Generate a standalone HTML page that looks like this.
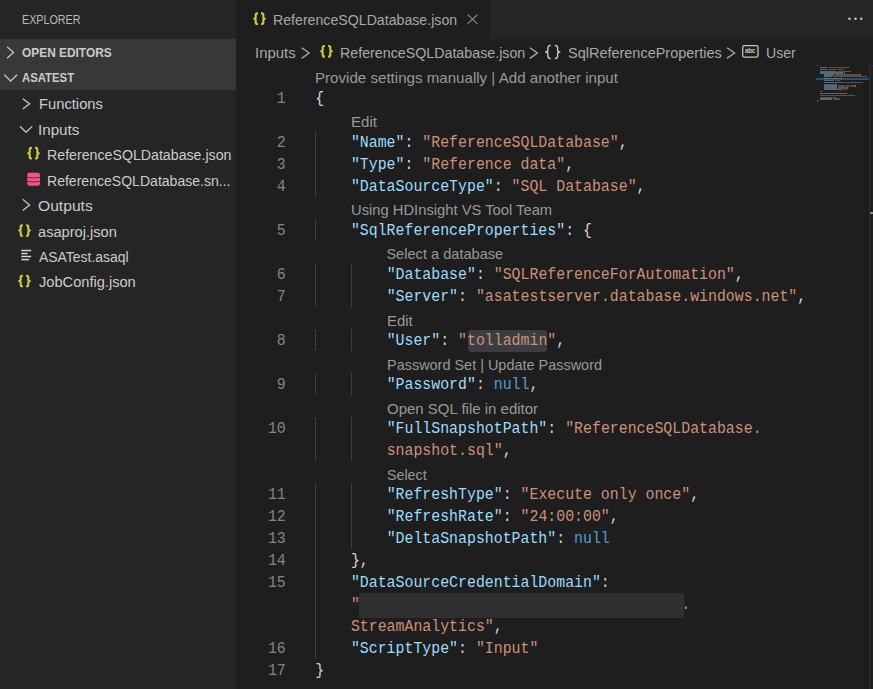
<!DOCTYPE html>
<html><head><meta charset="utf-8">
<style>
html,body{margin:0;padding:0;width:873px;height:689px;overflow:hidden;background:#1e1e1e;position:relative;font-family:"Liberation Sans",sans-serif}
.abs{position:absolute}
.t{position:absolute;white-space:pre;transform-origin:0 0;font-family:"Liberation Sans",sans-serif}
.ln{position:absolute;left:236px;width:49.8px;text-align:right;font-family:"Liberation Mono",monospace;font-size:14.881px;line-height:22px;color:#858585;white-space:pre;transform:scaleY(1.06);transform-origin:0 15px}
.cl{position:absolute;font-family:"Liberation Mono",monospace;font-size:14.881px;line-height:22px;white-space:pre;transform:scaleY(1.06);transform-origin:0 15px}
.g{position:absolute;width:1px;height:22px;background:#404040}
.mm{position:absolute;height:1.3px;opacity:.4}
svg{position:absolute;left:0;top:0;overflow:visible}
</style></head><body>
<div class="abs" style="left:0;top:0;width:236px;height:689px;background:#252526"></div>
<div class="abs" style="left:236px;top:0;width:1px;height:689px;background:#222223"></div>
<div class="abs" style="left:0;top:39px;width:236px;height:51px;background:#383838"></div>
<div class="abs" style="left:237px;top:0;width:636px;height:39px;background:#252526"></div>
<div class="abs" style="left:237px;top:0;width:253px;height:39px;background:#1e1e1e"></div>
<!-- selection + redaction -->
<div class="abs" style="left:467.6px;top:330px;width:79.4px;height:22px;border-radius:3px;background:#3a3d41"></div>
<div class="abs" style="left:358.8px;top:593px;width:325.4px;height:24.5px;border-radius:2px;background:#2f2f2f"></div>
<!-- minimap highlight + ruler -->
<div class="abs" style="left:816px;top:78px;width:53px;height:2px;background:#264f78"></div>
<div class="abs" style="left:869px;top:64.5px;width:2px;height:625px;background:#282828"></div>
<div class="abs" style="left:869px;top:64.5px;width:4px;height:1px;background:#2c2c2c"></div>
<div class="abs" style="left:870px;top:212px;width:3px;height:2px;background:#8c8c8c"></div>
<div class="mm" style="left:816.60px;top:65.00px;width:0.92px;background:#d4d4d4"></div>
<div class="mm" style="left:820.28px;top:66.86px;width:5.52px;background:#9cdcfe"></div>
<div class="mm" style="left:825.80px;top:66.86px;width:0.92px;background:#d4d4d4"></div>
<div class="mm" style="left:827.64px;top:66.86px;width:20.24px;background:#ce9178"></div>
<div class="mm" style="left:847.88px;top:66.86px;width:0.92px;background:#d4d4d4"></div>
<div class="mm" style="left:820.28px;top:68.71px;width:5.52px;background:#9cdcfe"></div>
<div class="mm" style="left:825.80px;top:68.71px;width:0.92px;background:#d4d4d4"></div>
<div class="mm" style="left:827.64px;top:68.71px;width:9.20px;background:#ce9178"></div>
<div class="mm" style="left:837.76px;top:68.71px;width:4.60px;background:#ce9178"></div>
<div class="mm" style="left:842.36px;top:68.71px;width:0.92px;background:#d4d4d4"></div>
<div class="mm" style="left:820.28px;top:70.57px;width:14.72px;background:#9cdcfe"></div>
<div class="mm" style="left:835.00px;top:70.57px;width:0.92px;background:#d4d4d4"></div>
<div class="mm" style="left:836.84px;top:70.57px;width:3.68px;background:#ce9178"></div>
<div class="mm" style="left:841.44px;top:70.57px;width:8.28px;background:#ce9178"></div>
<div class="mm" style="left:849.72px;top:70.57px;width:0.92px;background:#d4d4d4"></div>
<div class="mm" style="left:820.28px;top:72.42px;width:22.08px;background:#9cdcfe"></div>
<div class="mm" style="left:842.36px;top:72.42px;width:0.92px;background:#d4d4d4"></div>
<div class="mm" style="left:844.20px;top:72.42px;width:0.92px;background:#d4d4d4"></div>
<div class="mm" style="left:823.96px;top:74.28px;width:9.20px;background:#9cdcfe"></div>
<div class="mm" style="left:833.16px;top:74.28px;width:0.92px;background:#d4d4d4"></div>
<div class="mm" style="left:835.00px;top:74.28px;width:24.84px;background:#ce9178"></div>
<div class="mm" style="left:859.84px;top:74.28px;width:0.92px;background:#d4d4d4"></div>
<div class="mm" style="left:823.96px;top:76.14px;width:7.36px;background:#9cdcfe"></div>
<div class="mm" style="left:831.32px;top:76.14px;width:0.92px;background:#d4d4d4"></div>
<div class="mm" style="left:833.16px;top:76.14px;width:33.12px;background:#ce9178"></div>
<div class="mm" style="left:866.28px;top:76.14px;width:0.92px;background:#d4d4d4"></div>
<div class="mm" style="left:823.96px;top:77.99px;width:5.52px;background:#9cdcfe"></div>
<div class="mm" style="left:829.48px;top:77.99px;width:0.92px;background:#d4d4d4"></div>
<div class="mm" style="left:831.32px;top:77.99px;width:10.12px;background:#ce9178"></div>
<div class="mm" style="left:841.44px;top:77.99px;width:0.92px;background:#d4d4d4"></div>
<div class="mm" style="left:823.96px;top:79.85px;width:9.20px;background:#9cdcfe"></div>
<div class="mm" style="left:833.16px;top:79.85px;width:0.92px;background:#d4d4d4"></div>
<div class="mm" style="left:835.00px;top:79.85px;width:3.68px;background:#569cd6"></div>
<div class="mm" style="left:838.68px;top:79.85px;width:0.92px;background:#d4d4d4"></div>
<div class="mm" style="left:823.96px;top:81.70px;width:16.56px;background:#9cdcfe"></div>
<div class="mm" style="left:840.52px;top:81.70px;width:0.92px;background:#d4d4d4"></div>
<div class="mm" style="left:842.36px;top:81.70px;width:20.24px;background:#ce9178"></div>
<div class="mm" style="left:823.96px;top:83.56px;width:11.96px;background:#ce9178"></div>
<div class="mm" style="left:835.92px;top:83.56px;width:0.92px;background:#d4d4d4"></div>
<div class="mm" style="left:823.96px;top:85.42px;width:11.96px;background:#9cdcfe"></div>
<div class="mm" style="left:835.92px;top:85.42px;width:0.92px;background:#d4d4d4"></div>
<div class="mm" style="left:837.76px;top:85.42px;width:7.36px;background:#ce9178"></div>
<div class="mm" style="left:846.04px;top:85.42px;width:3.68px;background:#ce9178"></div>
<div class="mm" style="left:850.64px;top:85.42px;width:4.60px;background:#ce9178"></div>
<div class="mm" style="left:855.24px;top:85.42px;width:0.92px;background:#d4d4d4"></div>
<div class="mm" style="left:823.96px;top:87.27px;width:11.96px;background:#9cdcfe"></div>
<div class="mm" style="left:835.92px;top:87.27px;width:0.92px;background:#d4d4d4"></div>
<div class="mm" style="left:837.76px;top:87.27px;width:9.20px;background:#ce9178"></div>
<div class="mm" style="left:846.96px;top:87.27px;width:0.92px;background:#d4d4d4"></div>
<div class="mm" style="left:823.96px;top:89.13px;width:17.48px;background:#9cdcfe"></div>
<div class="mm" style="left:841.44px;top:89.13px;width:0.92px;background:#d4d4d4"></div>
<div class="mm" style="left:843.28px;top:89.13px;width:3.68px;background:#569cd6"></div>
<div class="mm" style="left:820.28px;top:90.98px;width:1.84px;background:#d4d4d4"></div>
<div class="mm" style="left:820.28px;top:92.84px;width:25.76px;background:#9cdcfe"></div>
<div class="mm" style="left:846.04px;top:92.84px;width:0.92px;background:#d4d4d4"></div>
<div class="mm" style="left:820.28px;top:94.70px;width:34.96px;background:#ce9178"></div>
<div class="mm" style="left:820.28px;top:96.55px;width:14.72px;background:#ce9178"></div>
<div class="mm" style="left:835.00px;top:96.55px;width:0.92px;background:#d4d4d4"></div>
<div class="mm" style="left:820.28px;top:98.41px;width:11.04px;background:#9cdcfe"></div>
<div class="mm" style="left:831.32px;top:98.41px;width:0.92px;background:#d4d4d4"></div>
<div class="mm" style="left:833.16px;top:98.41px;width:6.44px;background:#ce9178"></div>
<div class="mm" style="left:816.60px;top:100.26px;width:0.92px;background:#d4d4d4"></div>
<div class="ln" style="top:88px">1</div>
<div class="cl" style="top:88px;left:315.20px"><span style="color:#d4d4d4">{</span></div>
<div class="ln" style="top:132px">2</div>
<div class="cl" style="top:132px;left:350.92px"><span style="color:#9cdcfe">&quot;Name&quot;</span><span style="color:#d4d4d4">: </span><span style="color:#ce9178">&quot;ReferenceSQLDatabase&quot;</span><span style="color:#d4d4d4">,</span></div>
<div class="g" style="top:131px;left:315px"></div>
<div class="ln" style="top:154px">3</div>
<div class="cl" style="top:154px;left:350.92px"><span style="color:#9cdcfe">&quot;Type&quot;</span><span style="color:#d4d4d4">: </span><span style="color:#ce9178">&quot;Reference data&quot;</span><span style="color:#d4d4d4">,</span></div>
<div class="g" style="top:153px;left:315px"></div>
<div class="ln" style="top:176px">4</div>
<div class="cl" style="top:176px;left:350.92px"><span style="color:#9cdcfe">&quot;DataSourceType&quot;</span><span style="color:#d4d4d4">: </span><span style="color:#ce9178">&quot;SQL Database&quot;</span><span style="color:#d4d4d4">,</span></div>
<div class="g" style="top:175px;left:315px"></div>
<div class="ln" style="top:220px">5</div>
<div class="cl" style="top:220px;left:350.92px"><span style="color:#9cdcfe">&quot;SqlReferenceProperties&quot;</span><span style="color:#d4d4d4">: </span><span style="color:#d4d4d4">{</span></div>
<div class="g" style="top:219px;left:315px"></div>
<div class="ln" style="top:264px">6</div>
<div class="cl" style="top:264px;left:386.64px"><span style="color:#9cdcfe">&quot;Database&quot;</span><span style="color:#d4d4d4">: </span><span style="color:#ce9178">&quot;SQLReferenceForAutomation&quot;</span><span style="color:#d4d4d4">,</span></div>
<div class="g" style="top:263px;left:315px"></div>
<div class="g" style="top:263px;left:351px"></div>
<div class="ln" style="top:286px">7</div>
<div class="cl" style="top:286px;left:386.64px"><span style="color:#9cdcfe">&quot;Server&quot;</span><span style="color:#d4d4d4">: </span><span style="color:#ce9178">&quot;asatestserver.database.windows.net&quot;</span><span style="color:#d4d4d4">,</span></div>
<div class="g" style="top:285px;left:315px"></div>
<div class="g" style="top:285px;left:351px"></div>
<div class="ln" style="top:330px">8</div>
<div class="cl" style="top:330px;left:386.64px"><span style="color:#9cdcfe">&quot;User&quot;</span><span style="color:#d4d4d4">: </span><span style="color:#ce9178">&quot;tolladmin&quot;</span><span style="color:#d4d4d4">,</span></div>
<div class="g" style="top:329px;left:315px"></div>
<div class="g" style="top:329px;left:351px"></div>
<div class="ln" style="top:374px">9</div>
<div class="cl" style="top:374px;left:386.64px"><span style="color:#9cdcfe">&quot;Password&quot;</span><span style="color:#d4d4d4">: </span><span style="color:#569cd6">null</span><span style="color:#d4d4d4">,</span></div>
<div class="g" style="top:373px;left:315px"></div>
<div class="g" style="top:373px;left:351px"></div>
<div class="ln" style="top:418px">10</div>
<div class="cl" style="top:418px;left:386.64px"><span style="color:#9cdcfe">&quot;FullSnapshotPath&quot;</span><span style="color:#d4d4d4">: </span><span style="color:#ce9178">&quot;ReferenceSQLDatabase.</span></div>
<div class="g" style="top:417px;left:315px"></div>
<div class="g" style="top:417px;left:351px"></div>
<div class="cl" style="top:440px;left:386.64px"><span style="color:#ce9178">snapshot.sql&quot;</span><span style="color:#d4d4d4">,</span></div>
<div class="g" style="top:439px;left:315px"></div>
<div class="g" style="top:439px;left:351px"></div>
<div class="ln" style="top:484px">11</div>
<div class="cl" style="top:484px;left:386.64px"><span style="color:#9cdcfe">&quot;RefreshType&quot;</span><span style="color:#d4d4d4">: </span><span style="color:#ce9178">&quot;Execute only once&quot;</span><span style="color:#d4d4d4">,</span></div>
<div class="g" style="top:483px;left:315px"></div>
<div class="g" style="top:483px;left:351px"></div>
<div class="ln" style="top:506px">12</div>
<div class="cl" style="top:506px;left:386.64px"><span style="color:#9cdcfe">&quot;RefreshRate&quot;</span><span style="color:#d4d4d4">: </span><span style="color:#ce9178">&quot;24:00:00&quot;</span><span style="color:#d4d4d4">,</span></div>
<div class="g" style="top:505px;left:315px"></div>
<div class="g" style="top:505px;left:351px"></div>
<div class="ln" style="top:528px">13</div>
<div class="cl" style="top:528px;left:386.64px"><span style="color:#9cdcfe">&quot;DeltaSnapshotPath&quot;</span><span style="color:#d4d4d4">: </span><span style="color:#569cd6">null</span></div>
<div class="g" style="top:527px;left:315px"></div>
<div class="g" style="top:527px;left:351px"></div>
<div class="ln" style="top:550px">14</div>
<div class="cl" style="top:550px;left:350.92px"><span style="color:#d4d4d4">},</span></div>
<div class="g" style="top:549px;left:315px"></div>
<div class="ln" style="top:572px">15</div>
<div class="cl" style="top:572px;left:350.92px"><span style="color:#9cdcfe">&quot;DataSourceCredentialDomain&quot;</span><span style="color:#d4d4d4">:</span></div>
<div class="g" style="top:571px;left:315px"></div>
<div class="cl" style="top:594px;left:350.92px"><span style="color:#ce9178">&quot;</span><span style="color:#ce9178">                                    </span><span style="color:#ce9178">.</span></div>
<div class="g" style="top:593px;left:315px"></div>
<div class="cl" style="top:616px;left:350.92px"><span style="color:#ce9178">StreamAnalytics&quot;</span><span style="color:#d4d4d4">,</span></div>
<div class="g" style="top:615px;left:315px"></div>
<div class="ln" style="top:638px">16</div>
<div class="cl" style="top:638px;left:350.92px"><span style="color:#9cdcfe">&quot;ScriptType&quot;</span><span style="color:#d4d4d4">: </span><span style="color:#ce9178">&quot;Input&quot;</span></div>
<div class="g" style="top:637px;left:315px"></div>
<div class="ln" style="top:660px">17</div>
<div class="cl" style="top:660px;left:315.20px"><span style="color:#d4d4d4">}</span></div>
<div class="t" style="left:22.26px;top:14.00px;font-size:12.76px;line-height:12.76px;font-weight:400;color:#bbbbbb;transform:scaleX(0.8412);">EXPLORER</div>
<div class="t" style="left:22.40px;top:47.00px;font-size:12.76px;line-height:12.76px;font-weight:700;color:#cccccc;transform:scaleX(0.9333);">OPEN EDITORS</div>
<div class="t" style="left:22.40px;top:72.00px;font-size:12.76px;line-height:12.76px;font-weight:700;color:#cccccc;transform:scaleX(0.8898);">ASATEST</div>
<div class="t" style="left:38.52px;top:96.00px;font-size:15.1px;line-height:15.1px;font-weight:400;color:#cccccc;transform:scaleX(0.9766);">Functions</div>
<div class="t" style="left:38.49px;top:121.50px;font-size:15.1px;line-height:15.1px;font-weight:400;color:#cccccc;transform:scaleX(1.0050);">Inputs</div>
<div class="t" style="left:47.46px;top:147.00px;font-size:15.1px;line-height:15.1px;font-weight:400;color:#cccccc;transform:scaleX(0.9395);">ReferenceSQLDatabase.json</div>
<div class="t" style="left:47.47px;top:172.50px;font-size:15.1px;line-height:15.1px;font-weight:400;color:#cccccc;transform:scaleX(0.9308);">ReferenceSQLDatabase.sn...</div>
<div class="t" style="left:38.16px;top:198.00px;font-size:15.1px;line-height:15.1px;font-weight:400;color:#cccccc;transform:scaleX(1.0353);">Outputs</div>
<div class="t" style="left:38.23px;top:223.50px;font-size:15.1px;line-height:15.1px;font-weight:400;color:#cccccc;transform:scaleX(0.9688);">asaproj.json</div>
<div class="t" style="left:39.20px;top:249.00px;font-size:15.1px;line-height:15.1px;font-weight:400;color:#cccccc;transform:scaleX(0.9240);">ASATest.asaql</div>
<div class="t" style="left:39.20px;top:274.00px;font-size:15.1px;line-height:15.1px;font-weight:400;color:#cccccc;transform:scaleX(0.9687);">JobConfig.json</div>
<div class="t" style="left:273.46px;top:12.00px;font-size:15.1px;line-height:15.1px;font-weight:400;color:#a8a8a8;transform:scaleX(0.9379);">ReferenceSQLDatabase.json</div>
<div class="t" style="left:255.41px;top:45.00px;font-size:15.1px;line-height:15.1px;font-weight:400;color:#a9a9a9;transform:scaleX(0.9900);">Inputs</div>
<div class="t" style="left:340.06px;top:45.00px;font-size:15.1px;line-height:15.1px;font-weight:400;color:#a9a9a9;transform:scaleX(0.9436);">ReferenceSQLDatabase.json</div>
<div class="t" style="left:568.34px;top:45.00px;font-size:15.1px;line-height:15.1px;font-weight:400;color:#a9a9a9;transform:scaleX(0.9591);">SqlReferenceProperties</div>
<div class="t" style="left:766.17px;top:45.00px;font-size:15.1px;line-height:15.1px;font-weight:400;color:#a9a9a9;transform:scaleX(0.9323);">User</div>
<div class="t" style="left:315.46px;top:71.00px;font-size:14.6px;line-height:14.6px;font-weight:400;color:#999999;transform:scaleX(1.0353);">Provide settings manually | Add another input</div>
<div class="t" style="left:350.97px;top:115.00px;font-size:14.6px;line-height:14.6px;font-weight:400;color:#999999;transform:scaleX(1.0333);">Edit</div>
<div class="t" style="left:350.99px;top:203.00px;font-size:14.6px;line-height:14.6px;font-weight:400;color:#999999;transform:scaleX(1.0107);">Using HDInsight VS Tool Team</div>
<div class="t" style="left:386.40px;top:247.00px;font-size:14.6px;line-height:14.6px;font-weight:400;color:#999999;">Select a database</div>
<div class="t" style="left:387.08px;top:313.50px;font-size:14.6px;line-height:14.6px;font-weight:400;color:#999999;transform:scaleX(1.0208);">Edit</div>
<div class="t" style="left:386.91px;top:357.50px;font-size:14.6px;line-height:14.6px;font-weight:400;color:#999999;transform:scaleX(0.9902);">Password Set | Update Password</div>
<div class="t" style="left:386.77px;top:401.50px;font-size:14.6px;line-height:14.6px;font-weight:400;color:#999999;transform:scaleX(1.0267);">Open SQL file in editor</div>
<div class="t" style="left:386.62px;top:467.50px;font-size:14.6px;line-height:14.6px;font-weight:400;color:#999999;transform:scaleX(0.9775);">Select</div>
<svg width="873" height="689" viewBox="0 0 873 689" fill="none" stroke-linecap="square">
 <g stroke="#c5c5c5" stroke-width="1.3" fill="none" stroke-linejoin="miter">
  <polyline points="7.5,47.3 13.6,52.5 7.5,57.8"/>
  <polyline points="4.7,75.2 10.65,81 16.6,75.2"/>
  <polyline points="23.3,99.1 29.6,103.85 23.3,108.6"/>
  <polyline points="20.5,126.8 26.1,132.3 31.7,126.8"/>
  <polyline points="23.3,199.7 29.6,204.95 23.3,210.2"/>
 </g>
 <g stroke="#a9a9a9" stroke-width="1.3" fill="none">
  <polyline points="302.1,48.1 309.2,53.05 302.1,58"/>
  <polyline points="530.4,48.1 537.4,53.05 530.4,58"/>
  <polyline points="727.5,48.1 734.6,53.05 727.5,58"/>
 </g>
 <!-- tab close -->
 <g stroke="#8f8f8f" stroke-width="1.05">
  <line x1="468" y1="15" x2="477" y2="23.6"/><line x1="477" y1="15" x2="468" y2="23.6"/>
 </g>
 <!-- dots -->
 <g fill="#c5c5c5"><circle cx="849.5" cy="18.7" r="1.3"/><circle cx="855.5" cy="18.7" r="1.3"/><circle cx="861.2" cy="18.7" r="1.3"/></g>
 <defs>
  <g id="br">
   <path d="M4.9,1.2 L4.2,1.2 Q2.7,1.2 2.7,2.7 L2.7,5 Q2.7,6.5 1.2,6.5 Q2.7,6.5 2.7,8 L2.7,10.3 Q2.7,11.8 4.2,11.8 L4.9,11.8"/>
   <path d="M8.1,1.2 L8.8,1.2 Q10.3,1.2 10.3,2.7 L10.3,5 Q10.3,6.5 11.8,6.5 Q10.3,6.5 10.3,8 L10.3,10.3 Q10.3,11.8 8.8,11.8 L8.1,11.8"/>
  </g>
  <g id="brw">
   <path d="M5.8,0.65 Q2.9,0.65 2.9,3.2 L2.9,5.2 Q2.9,7.2 0.65,7.2 Q2.9,7.2 2.9,9.2 L2.9,11.2 Q2.9,13.75 5.8,13.75"/>
   <path d="M9.7,0.65 Q12.6,0.65 12.6,3.2 L12.6,5.2 Q12.6,7.2 14.85,7.2 Q12.6,7.2 12.6,9.2 L12.6,11.2 Q12.6,13.75 9.7,13.75"/>
  </g>
 </defs>
 <g stroke="#cbcb41" stroke-width="2.1" fill="none" stroke-linecap="butt" stroke-linejoin="round">
  <use href="#br" transform="translate(253,12.2)"/>
  <use href="#br" transform="translate(320,44.8)"/>
  <use href="#br" transform="translate(27,146.7)"/>
  <use href="#br" transform="translate(18,224)"/>
  <use href="#br" transform="translate(18,274.5)"/>
 </g>
 <g stroke="#d4d4d4" stroke-width="1.3" fill="none" stroke-linecap="butt" stroke-linejoin="round">
  <use href="#brw" transform="translate(545,44.8)"/>
 </g>
 <!-- database icon -->
 <rect x="27.2" y="172.8" width="12.8" height="12.9" rx="2.2" fill="#f55385"/>
 <g stroke="#4a2233" stroke-width="0.85" fill="none">
  <path d="M27,177.4 Q33.6,178.6 40.2,177.4"/>
  <path d="M27,181.4 Q33.6,182.6 40.2,181.4"/>
 </g>
 <!-- lines icon -->
 <g stroke="#d4d7d6" stroke-width="1.5" stroke-linecap="butt">
  <line x1="21.3" y1="250.5" x2="31.2" y2="250.5"/>
  <line x1="21.3" y1="253.5" x2="27.6" y2="253.5"/>
  <line x1="21.3" y1="256.5" x2="31.2" y2="256.5"/>
  <line x1="21.3" y1="259.6" x2="29.1" y2="259.6"/>
 </g>
 <!-- abc icon -->
 <rect x="742.7" y="45.6" width="15.3" height="11.6" rx="1.5" stroke="#c5c5c5" stroke-width="1.3" fill="none"/>
 <text x="745" y="53.3" font-family="Liberation Sans" font-weight="700" font-size="6.5" fill="#c5c5c5" textLength="10.4">abc</text>
</svg>
</body></html>
